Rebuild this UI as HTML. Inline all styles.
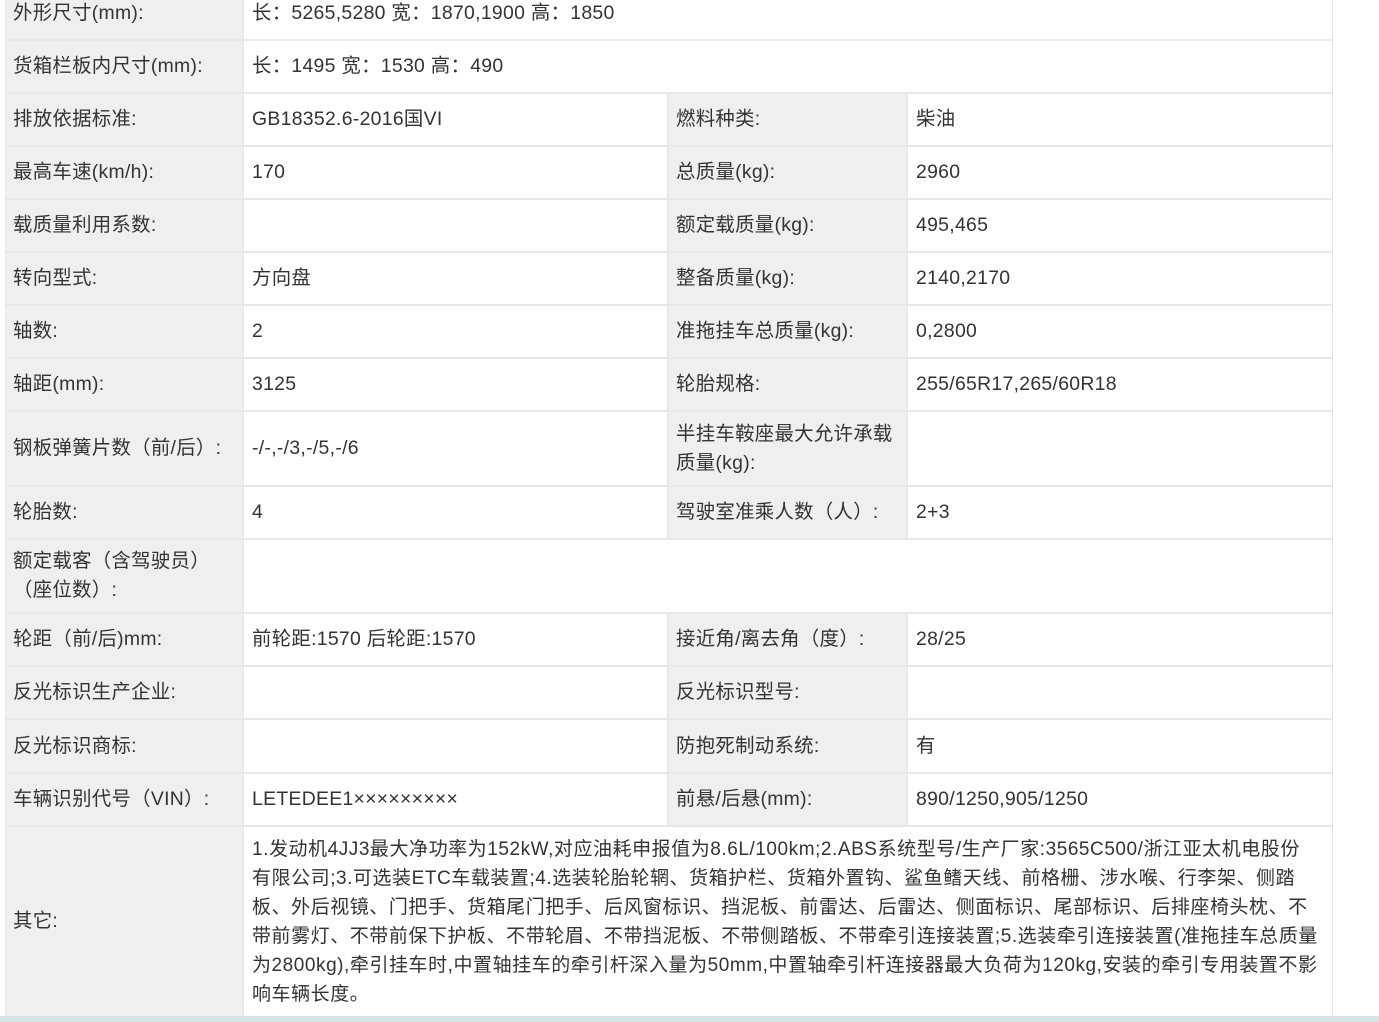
<!DOCTYPE html>
<html><head><meta charset="utf-8"><style>
*{margin:0;padding:0;box-sizing:border-box}
body{width:1379px;height:1022px;background:#fff;position:relative;overflow:hidden;font-family:"Liberation Sans","Noto Sans CJK SC",sans-serif;font-size:19.4px;letter-spacing:0.3px;color:#333}
.c{position:absolute;padding-left:8px;display:flex;align-items:center;border-bottom:2px solid #e8e8e8;border-right:1px solid #e4e4e4;white-space:nowrap;line-height:29px}
.l{background:#efefef}
.bot{position:absolute;left:0;top:1016px;width:1379px;height:6px;background:#d5e4e6}
.ml{white-space:normal}
</style></head><body>
<div class="c l" style="left:5px;top:-13px;width:239px;height:54px">外形尺寸(mm):</div>
<div class="c" style="left:244px;top:-13px;width:1089px;height:54px">长：5265,5280 宽：1870,1900 高：1850</div>

<div class="c l" style="left:5px;top:41px;width:239px;height:53px">货箱栏板内尺寸(mm):</div>
<div class="c" style="left:244px;top:41px;width:1089px;height:53px">长：1495 宽：1530 高：490</div>

<div class="c l" style="left:5px;top:94px;width:239px;height:53px">排放依据标准:</div>
<div class="c" style="left:244px;top:94px;width:424px;height:53px">GB18352.6-2016国VI</div>
<div class="c l" style="left:668px;top:94px;width:240px;height:53px">燃料种类:</div>
<div class="c" style="left:908px;top:94px;width:425px;height:53px">柴油</div>

<div class="c l" style="left:5px;top:147px;width:239px;height:53px">最高车速(km/h):</div>
<div class="c" style="left:244px;top:147px;width:424px;height:53px">170</div>
<div class="c l" style="left:668px;top:147px;width:240px;height:53px">总质量(kg):</div>
<div class="c" style="left:908px;top:147px;width:425px;height:53px">2960</div>

<div class="c l" style="left:5px;top:200px;width:239px;height:53px">载质量利用系数:</div>
<div class="c" style="left:244px;top:200px;width:424px;height:53px"></div>
<div class="c l" style="left:668px;top:200px;width:240px;height:53px">额定载质量(kg):</div>
<div class="c" style="left:908px;top:200px;width:425px;height:53px">495,465</div>

<div class="c l" style="left:5px;top:253px;width:239px;height:53px">转向型式:</div>
<div class="c" style="left:244px;top:253px;width:424px;height:53px">方向盘</div>
<div class="c l" style="left:668px;top:253px;width:240px;height:53px">整备质量(kg):</div>
<div class="c" style="left:908px;top:253px;width:425px;height:53px">2140,2170</div>

<div class="c l" style="left:5px;top:306px;width:239px;height:53px">轴数:</div>
<div class="c" style="left:244px;top:306px;width:424px;height:53px">2</div>
<div class="c l" style="left:668px;top:306px;width:240px;height:53px">准拖挂车总质量(kg):</div>
<div class="c" style="left:908px;top:306px;width:425px;height:53px">0,2800</div>

<div class="c l" style="left:5px;top:359px;width:239px;height:53px">轴距(mm):</div>
<div class="c" style="left:244px;top:359px;width:424px;height:53px">3125</div>
<div class="c l" style="left:668px;top:359px;width:240px;height:53px">轮胎规格:</div>
<div class="c" style="left:908px;top:359px;width:425px;height:53px">255/65R17,265/60R18</div>

<div class="c l" style="left:5px;top:412px;width:239px;height:75px">钢板弹簧片数（前/后）:</div>
<div class="c" style="left:244px;top:412px;width:424px;height:75px">-/-,-/3,-/5,-/6</div>
<div class="c l ml" style="left:668px;top:412px;width:240px;height:75px">半挂车鞍座最大允许承载<br>质量(kg):</div>
<div class="c" style="left:908px;top:412px;width:425px;height:75px"></div>

<div class="c l" style="left:5px;top:487px;width:239px;height:53px">轮胎数:</div>
<div class="c" style="left:244px;top:487px;width:424px;height:53px">4</div>
<div class="c l" style="left:668px;top:487px;width:240px;height:53px">驾驶室准乘人数（人）:</div>
<div class="c" style="left:908px;top:487px;width:425px;height:53px">2+3</div>

<div class="c l ml" style="left:5px;top:540px;width:239px;height:74px">额定载客（含驾驶员）<br>（座位数）:</div>
<div class="c" style="left:244px;top:540px;width:1089px;height:74px"></div>

<div class="c l" style="left:5px;top:614px;width:239px;height:53px">轮距（前/后)mm:</div>
<div class="c" style="left:244px;top:614px;width:424px;height:53px">前轮距:1570 后轮距:1570</div>
<div class="c l" style="left:668px;top:614px;width:240px;height:53px">接近角/离去角（度）:</div>
<div class="c" style="left:908px;top:614px;width:425px;height:53px">28/25</div>

<div class="c l" style="left:5px;top:667px;width:239px;height:53px">反光标识生产企业:</div>
<div class="c" style="left:244px;top:667px;width:424px;height:53px"></div>
<div class="c l" style="left:668px;top:667px;width:240px;height:53px">反光标识型号:</div>
<div class="c" style="left:908px;top:667px;width:425px;height:53px"></div>

<div class="c l" style="left:5px;top:720px;width:239px;height:54px">反光标识商标:</div>
<div class="c" style="left:244px;top:720px;width:424px;height:54px"></div>
<div class="c l" style="left:668px;top:720px;width:240px;height:54px">防抱死制动系统:</div>
<div class="c" style="left:908px;top:720px;width:425px;height:54px">有</div>

<div class="c l" style="left:5px;top:774px;width:239px;height:53px">车辆识别代号（VIN）:</div>
<div class="c" style="left:244px;top:774px;width:424px;height:53px">LETEDEE1×××××××××</div>
<div class="c l" style="left:668px;top:774px;width:240px;height:53px">前悬/后悬(mm):</div>
<div class="c" style="left:908px;top:774px;width:425px;height:53px">890/1250,905/1250</div>

<div class="c l" style="left:5px;top:827px;width:239px;height:189px;border-bottom:none">其它:</div>
<div class="c" style="left:244px;top:827px;width:1089px;height:189px;border-bottom:none;align-items:flex-start;padding-top:8px;font-size:19px;letter-spacing:0.55px">
<div>1.发动机4JJ3最大净功率为152kW,对应油耗申报值为8.6L/100km;2.ABS系统型号/生产厂家:3565C500/浙江亚太机电股份<br>有限公司;3.可选装ETC车载装置;4.选装轮胎轮辋、货箱护栏、货箱外置钩、鲨鱼鳍天线、前格栅、涉水喉、行李架、侧踏<br>板、外后视镜、门把手、货箱尾门把手、后风窗标识、挡泥板、前雷达、后雷达、侧面标识、尾部标识、后排座椅头枕、不<br>带前雾灯、不带前保下护板、不带轮眉、不带挡泥板、不带侧踏板、不带牵引连接装置;5.选装牵引连接装置(准拖挂车总质量<br>为2800kg),牵引挂车时,中置轴挂车的牵引杆深入量为50mm,中置轴牵引杆连接器最大负荷为120kg,安装的牵引专用装置不影<br>响车辆长度。</div>
</div>
<div class="bot"></div>
</body></html>
